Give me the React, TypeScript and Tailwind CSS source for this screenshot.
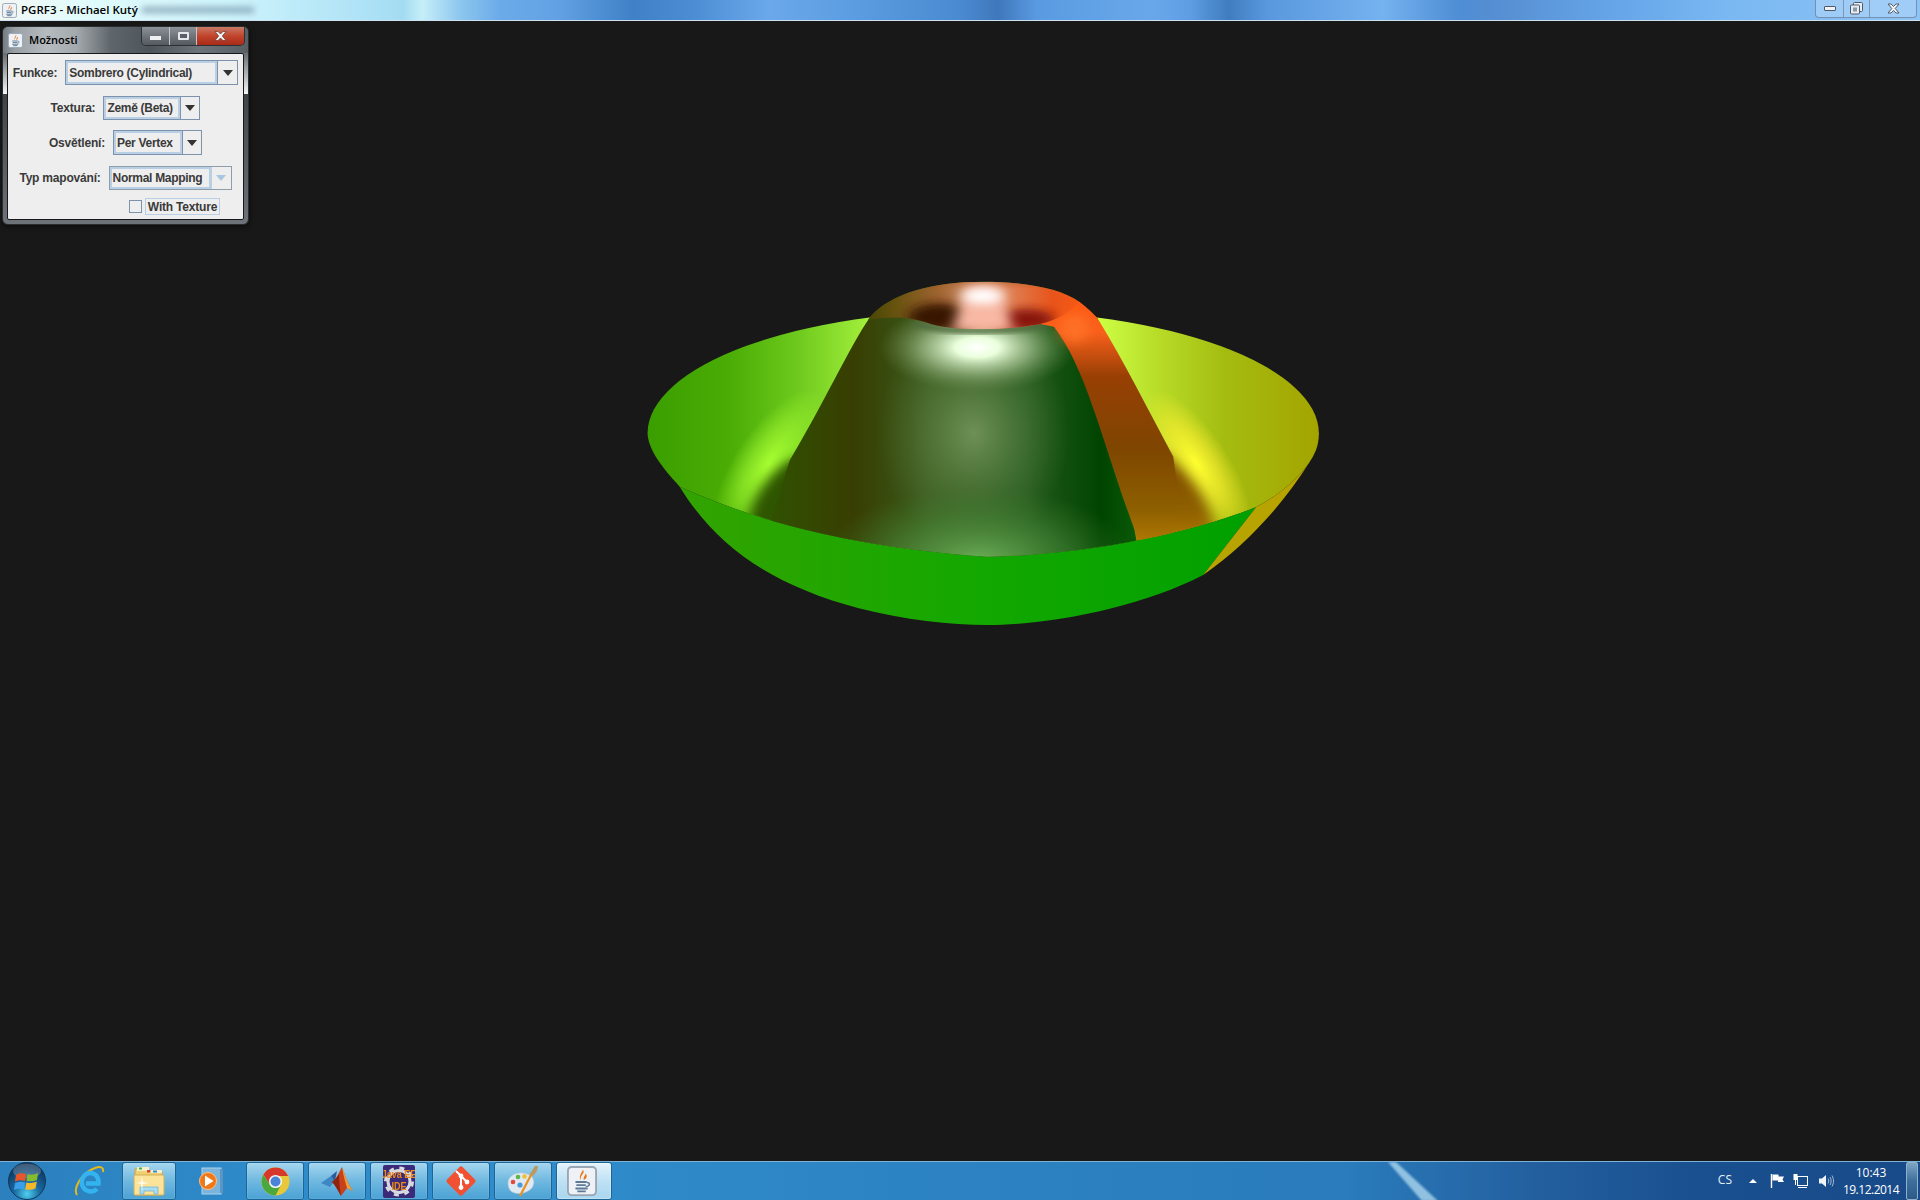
import React from 'react';

const sans = "font-['Liberation_Sans',sans-serif]";
const ui = "font-['Open_Sans',sans-serif]";

function JavaIcon({ size = 16 }: { size?: number }) {
    return (
        <svg width={size} height={size} viewBox="0 0 16 16">
            <rect x="0.5" y="0.5" width="15" height="15" rx="2" fill="#eef1f5" stroke="#9aa6b4" />
            <path d="M8.5 2 C10 4 6.5 5 7.5 7.5 C6 6 7.5 4 8.5 2 Z M10 4 C9.5 5.5 8.5 6 9 7.5 C10.5 6.5 11 5.5 10 4 Z" fill="#e8751a" />
            <path d="M4.5 8.5 H10.5 M5 10.2 H10 M4.5 12 H11 M5.5 13.5 H10" stroke="#5d7b96" strokeWidth="1" fill="none" />
            <path d="M10.5 8.8 C12.5 8.6 12.5 10.8 10 11" stroke="#5d7b96" strokeWidth="0.8" fill="none" />
        </svg>
    );
}

function TitleBar() {
    return (
        <div className="relative h-[21px] shrink-0 border-b border-[#cfe0ef] bg-[linear-gradient(90deg,#f2f7f5_0%,#e2fbfb_4%,#cdf3fb_12%,#aee2f6_19%,#a3dcf2_21%,#c6eef8_22%,#8cc6ee_24%,#6cabe9_26%,#62a2e4_29%,#3f80c6_33%,#4b8cd2_36%,#6aa8ea_40%,#5d9ee2_44%,#4a8ad0_50%,#3f78bc_52%,#5a9ae0_54%,#68a8ea_60%,#5e9de2_62%,#3f7cc0_64%,#5a98de_66%,#74b2f0_72%,#4f8dd4_76%,#568fd2_78%,#65a5e8_84%,#7ab8f2_90%,#8cc4f4_100%)]">
            <div className="flex h-full items-center pl-[2px]">
                <JavaIcon size={15} />
                <span className={`ml-[4px] text-[11.5px] leading-none font-semibold text-black ${ui}`}>PGRF3 - Michael Kutý</span>
                <div className="ml-[4px] h-[6px] w-[112px] bg-[#6f8fa5]/70 blur-[3px]" />
            </div>
            <div className="absolute top-0 right-[3px] flex h-[18px] w-[102px] rounded-b-[4px] border border-t-0 border-[#7590b0] bg-[#a9d2f8]/70">
                <div className="flex w-[28px] items-center justify-center border-r border-[#7c97b6]">
                    <div className="h-[5px] w-[12px] rounded-[1px] border border-[#505a66] bg-[#eef2f6]" />
                </div>
                <div className="flex w-[26px] items-center justify-center border-r border-[#7c97b6]">
                    <svg width="13" height="13" viewBox="0 0 13 13">
                        <rect x="3.5" y="0.5" width="9" height="9" rx="1" fill="#e6edf5" stroke="#505a66" />
                        <rect x="0.5" y="3" width="9" height="9" rx="1" fill="#e6edf5" stroke="#505a66" />
                        <rect x="3" y="5.5" width="4" height="4" fill="#8a98a8" />
                    </svg>
                </div>
                <div className="flex flex-1 items-center justify-center">
                    <svg width="13" height="11" viewBox="0 0 13 11">
                        <path d="M1 1 H4 L6.5 3.5 L9 1 H12 L8.2 5.5 L12 10 H9 L6.5 7.5 L4 10 H1 L4.8 5.5 Z" fill="#f2f5f8" stroke="#505a66" />
                    </svg>
                </div>
            </div>
        </div>
    );
}

function Combo({ text, width, arrow, disabled }: { text: string; width: string; arrow: string; disabled?: boolean }) {
    return (
        <div className={`flex h-full ${width} border ${disabled ? 'border-[#8f9dab]' : 'border-[#7d93ab]'} bg-[#eeeeee]`}>
            <div className="flex min-w-0 flex-1 items-center border-2 border-[#b8cfe5] pl-[1px]">
                <span className={`whitespace-nowrap text-[12px] font-bold tracking-[-0.3px] text-[#3a3a3a] ${sans}`}>{text}</span>
            </div>
            <div className={`flex ${arrow} shrink-0 items-center justify-center border-l ${disabled ? 'border-[#b8cfe5]' : 'border-[#7d93ab]'}`}>
                <svg width="10" height="6" viewBox="0 0 10 6">
                    <path d="M0 0 H10 L5 6 Z" fill={disabled ? '#a9c6e0' : '#333333'} />
                </svg>
            </div>
        </div>
    );
}

function Label({ children }: { children: React.ReactNode }) {
    return <span className={`whitespace-nowrap text-[12px] font-bold tracking-[-0.2px] text-[#3a3a3a] ${sans}`}>{children}</span>;
}

function OptionsDialog() {
    return (
        <div className="absolute top-[5px] left-[2px] flex h-[199px] w-[247px] flex-col overflow-hidden rounded-[6px] border border-[#2a2d30] bg-[linear-gradient(180deg,#5f666b_0%,#6a7176_14%,#f4f6f7_34%,#e6e8ea_34%,#3f4448_34.2%,#6d7378_100%)] shadow-[1px_2px_5px_rgba(0,0,0,0.5)]">
            <div className="relative flex h-[26px] shrink-0 items-center bg-[linear-gradient(90deg,#747d83_0%,#9aa1a6_5%,#b6bbbf_18%,#a4a9ad_30%,#5f666b_44%,#4e555a_60%,#6d7479_80%,#585f64_100%)] pl-[5px]">
                <JavaIcon size={15} />
                <span className={`ml-[6px] text-[11px] font-semibold text-black ${ui}`}>Možnosti</span>
                <div className="absolute top-0 right-[3px] flex h-[19px] w-[104px] overflow-hidden rounded-b-[5px] border border-t-0 border-[#2d3135]">
                    <div className="flex w-[28px] items-center justify-center border-r border-[#c0c6cb] bg-[linear-gradient(180deg,#8c9298_0%,#6f757b_50%,#53595e_100%)]">
                        <div className="h-[4px] w-[11px] translate-y-[2px] bg-[#eef0f2]" />
                    </div>
                    <div className="flex w-[27px] items-center justify-center border-r border-[#c0c6cb] bg-[linear-gradient(180deg,#8c9298_0%,#6f757b_50%,#53595e_100%)]">
                        <div className="flex h-[8px] w-[11px] items-center justify-center rounded-[1px] border-2 border-[#e6e8ea] bg-[#5a6065]" />
                    </div>
                    <div className="flex flex-1 items-center justify-center bg-[linear-gradient(180deg,#c97a66_0%,#c2442c_50%,#a82a18_100%)]">
                        <svg width="13" height="10" viewBox="0 0 13 10">
                            <path d="M1 0.5 H4 L6.5 3 L9 0.5 H12 L8.3 5 L12 9.5 H9 L6.5 7 L4 9.5 H1 L4.7 5 Z" fill="#f2f4f6" stroke="#5a3a34" strokeWidth="0.7" />
                        </svg>
                    </div>
                </div>
            </div>
            <div className="mx-[4px] flex h-[167px] flex-col rounded-[2px] border border-[#16181a] bg-[#eeeeee] pt-[6px]">
                <div className="flex h-[25px] items-center justify-center gap-2">
                    <Label>Funkce:</Label>
                    <Combo text="Sombrero (Cylindrical)" width="w-[173px]" arrow="w-[20px]" />
                </div>
                <div className="mt-[11px] flex h-[24px] items-center justify-center gap-2">
                    <Label>Textura:</Label>
                    <Combo text="Země (Beta)" width="w-[97px]" arrow="w-[19px]" />
                </div>
                <div className="mt-[10px] flex h-[25px] items-center justify-center gap-2">
                    <Label>Osvětlení:</Label>
                    <Combo text="Per Vertex" width="w-[89px]" arrow="w-[19px]" />
                </div>
                <div className="mt-[11px] flex h-[24px] items-center justify-center gap-2">
                    <Label>Typ mapování:</Label>
                    <Combo text="Normal Mapping" width="w-[123px]" arrow="w-[20px]" disabled />
                </div>
                <div className="mt-[8px] flex h-[17px] items-center justify-end gap-[3px] pr-[23px]">
                    <div className="h-[13px] w-[13px] border border-[#7d93ab] bg-[#eeeeee]" />
                    <div className="flex h-[17px] w-[75px] items-center justify-center border border-[#b8cfe5]">
                        <Label>With Texture</Label>
                    </div>
                </div>
            </div>
        </div>
    );
}

// coordinates are those of the 720x380 crop, stretched to 1568x1140
const rimFront = 'C 300 785, 500 860, 800 890 C 1000 885, 1220 830, 1385 742';
const rimBack = 'M60 520 A 731 370 0 0 1 1522 520';
const insidePath = `${rimBack} C 1522 560, 1512 585, 1500 610 C 1470 665, 1435 705, 1385 742 C 1220 830, 1000 885, 800 890 C 500 860, 300 785, 130 680 C 90 620, 62 570, 60 520 Z`;
const aboveRimPath = 'M0 0 H1568 V742 H1385 C 1220 830, 1000 885, 800 890 C 500 860, 300 785, 130 680 H0 Z';
const conePath = 'M545 170 C 590 100, 680 65, 790 65 C 880 65, 960 85, 1000 125 L 1040 175 L 1132 900 L 300 900 C 350 700, 360 640, 370 600 C 440 440, 500 260, 545 170 Z';
const stripePath = 'M915 192 C 950 180, 980 160, 1000 125 C 1020 145, 1030 160, 1040 175 C 1100 310, 1150 450, 1205 590 L 1215 700 L 1200 870 L 1132 850 C 1060 600, 1020 330, 945 200 Z';

function Sombrero() {
    return (
        <svg width="720" height="380" viewBox="0 0 1568 1140" preserveAspectRatio="none">
            <defs>
                <linearGradient id="inner" x1="60" x2="1522" y1="0" y2="0" gradientUnits="userSpaceOnUse">
                    <stop offset="0" stopColor="#3a9e00" />
                    <stop offset="0.12" stopColor="#4aac04" />
                    <stop offset="0.22" stopColor="#6cc81c" />
                    <stop offset="0.33" stopColor="#a4f03c" />
                    <stop offset="0.67" stopColor="#ccff44" />
                    <stop offset="0.76" stopColor="#b8dc28" />
                    <stop offset="0.86" stopColor="#a4bc10" />
                    <stop offset="1" stopColor="#a4a400" />
                </linearGradient>
                <linearGradient id="outer" x1="130" x2="1385" y1="0" y2="0" gradientUnits="userSpaceOnUse">
                    <stop offset="0" stopColor="#33a300" />
                    <stop offset="0.5" stopColor="#14a800" />
                    <stop offset="1" stopColor="#00a000" />
                </linearGradient>
                <linearGradient id="cone" x1="300" x2="1132" y1="0" y2="0" gradientUnits="userSpaceOnUse">
                    <stop offset="0" stopColor="#2f5400" />
                    <stop offset="0.25" stopColor="#383e02" />
                    <stop offset="0.45" stopColor="#3a5a1c" />
                    <stop offset="0.7" stopColor="#245a1c" />
                    <stop offset="0.9" stopColor="#004400" />
                    <stop offset="1" stopColor="#0a5c08" />
                </linearGradient>
                <linearGradient id="stripe" x1="0" x2="0" y1="130" y2="860" gradientUnits="userSpaceOnUse">
                    <stop offset="0" stopColor="#ff5a14" />
                    <stop offset="0.12" stopColor="#f8601c" />
                    <stop offset="0.3" stopColor="#983f04" />
                    <stop offset="0.6" stopColor="#7e4600" />
                    <stop offset="0.85" stopColor="#8e6000" />
                    <stop offset="1" stopColor="#b47c04" />
                </linearGradient>
                <linearGradient id="ring" x1="545" x2="1040" y1="0" y2="0" gradientUnits="userSpaceOnUse">
                    <stop offset="0" stopColor="#4a4804" />
                    <stop offset="0.12" stopColor="#6a5410" />
                    <stop offset="0.3" stopColor="#a06430" />
                    <stop offset="0.5" stopColor="#d89a78" />
                    <stop offset="0.8" stopColor="#e8541a" />
                    <stop offset="1" stopColor="#ff5a14" />
                </linearGradient>
                <radialGradient id="lime">
                    <stop offset="0" stopColor="#a8ff30" />
                    <stop offset="0.5" stopColor="#a0f830" stopOpacity="0.6" />
                    <stop offset="1" stopColor="#a0f830" stopOpacity="0" />
                </radialGradient>
                <radialGradient id="yellow">
                    <stop offset="0" stopColor="#ffff30" />
                    <stop offset="0.5" stopColor="#fff030" stopOpacity="0.6" />
                    <stop offset="1" stopColor="#fff030" stopOpacity="0" />
                </radialGradient>
                <radialGradient id="glare">
                    <stop offset="0" stopColor="#ffffff" />
                    <stop offset="0.22" stopColor="#eaffdc" />
                    <stop offset="0.55" stopColor="#a8c494" stopOpacity="0.7" />
                    <stop offset="1" stopColor="#6a8a50" stopOpacity="0" />
                </radialGradient>
                <radialGradient id="column">
                    <stop offset="0" stopColor="#7e9e66" stopOpacity="0.8" />
                    <stop offset="1" stopColor="#5a8044" stopOpacity="0" />
                </radialGradient>
                <radialGradient id="glow">
                    <stop offset="0" stopColor="#6cae58" />
                    <stop offset="0.55" stopColor="#4c8c3c" stopOpacity="0.55" />
                    <stop offset="1" stopColor="#3c7c2c" stopOpacity="0" />
                </radialGradient>
                <filter id="b8" x="-50%" y="-50%" width="200%" height="200%"><feGaussianBlur stdDeviation="8" /></filter>
                <filter id="b14" x="-50%" y="-50%" width="200%" height="200%"><feGaussianBlur stdDeviation="14" /></filter>
                <clipPath id="insideClip"><path d={insidePath} /></clipPath>
                <clipPath id="aboveRim"><path d={aboveRimPath} /></clipPath>
                <clipPath id="coneClip"><path d={conePath} /></clipPath>
                <clipPath id="holeClip">
                    <path d="M540 50 H1040 V180 L 915 192 C 860 208, 730 218, 672 190 C 640 175, 600 165, 540 180 Z" />
                </clipPath>
            </defs>

            {/* back of the bowl */}
            <path d={insidePath} fill="url(#inner)" />
            <g clipPath="url(#insideClip)">
                <ellipse cx="325" cy="610" rx="80" ry="240" fill="url(#lime)" transform="rotate(24 325 610)" />
                <ellipse cx="1255" cy="610" rx="75" ry="240" fill="url(#yellow)" transform="rotate(-24 1255 610)" />
                {/* soft foot of the cone */}
                <path d="M370 600 C 320 650, 285 720, 280 790 L 500 880 L 500 560 Z" fill="#2f5400" filter="url(#b14)" />
                <path d="M1130 540 L 1195 590 C 1240 650, 1285 720, 1295 810 L 1100 890 Z" fill="url(#stripe)" filter="url(#b14)" />
            </g>

            {/* outside of the bowl */}
            <path d={`M130 680 ${rimFront} L 1270 945 C 1130 1045, 930 1095, 800 1095 C 720 1095, 620 1080, 520 1045 C 330 975, 210 860, 130 680 Z`} fill="url(#outer)" />
            <path d="M1385 742 C 1435 705, 1470 665, 1500 610 C 1450 720, 1370 850, 1270 945 Z" fill="#b8a400" />

            {/* cone, cut off by the front rim */}
            <g clipPath="url(#aboveRim)">
                <path d={conePath} fill="url(#cone)" />
                <g clipPath="url(#coneClip)">
                    <ellipse cx="770" cy="520" rx="210" ry="340" fill="url(#column)" />
                    <ellipse cx="780" cy="900" rx="340" ry="220" fill="url(#glow)" />
                    <ellipse cx="778" cy="262" rx="215" ry="135" fill="url(#glare)" />
                    <path d="M640 190 C 720 225, 860 215, 930 195" fill="none" stroke="#4e6a3c" strokeWidth="16" filter="url(#b8)" />
                    {/* top of the ring and the hole */}
                    <g clipPath="url(#holeClip)">
                        <rect x="540" y="50" width="500" height="170" fill="url(#ring)" />
                        <rect x="560" y="50" width="470" height="24" fill="#b05a20" opacity="0.6" filter="url(#b8)" />
                        <ellipse cx="695" cy="172" rx="68" ry="42" fill="#381404" filter="url(#b14)" />
                        <ellipse cx="885" cy="180" rx="62" ry="34" fill="#881808" filter="url(#b14)" />
                        <path d="M755 80 H825 L855 210 H725 Z" fill="#f8b8a4" filter="url(#b14)" />
                        <ellipse cx="790" cy="108" rx="44" ry="24" fill="#ffffff" filter="url(#b14)" />
                    </g>
                </g>
                {/* orange seam of the texture */}
                <path d={stripePath} fill="url(#stripe)" />
                <ellipse cx="990" cy="205" rx="30" ry="45" fill="#ff7428" filter="url(#b14)" opacity="0.8" />
            </g>
        </svg>
    );
}

function TaskButton({ active, width, children }: { active?: boolean; width: string; children: React.ReactNode }) {
    return (
        <div className={`flex h-[38px] ${width} shrink-0 items-center justify-center rounded-[3px] border border-[#1d6596] ${active ? 'bg-[linear-gradient(180deg,#e4f3fb_0%,#bfe1f4_50%,#a8d6ef_100%)] shadow-[inset_0_0_2px_#ffffff]' : 'bg-[linear-gradient(180deg,#a5d6ef_0%,#6fb8e0_50%,#4aa2d4_100%)] shadow-[inset_0_0_1px_#d8effa]'}`}>
            {children}
        </div>
    );
}

function StartOrb() {
    return (
        <svg width="40" height="40" viewBox="0 0 40 40">
            <defs>
                <radialGradient id="orb" cx="0.5" cy="0.85" r="0.85">
                    <stop offset="0" stopColor="#4fd0f0" />
                    <stop offset="0.4" stopColor="#1a6aa0" />
                    <stop offset="1" stopColor="#0a2a50" />
                </radialGradient>
            </defs>
            <circle cx="20" cy="20" r="18.5" fill="url(#orb)" stroke="#0e3a5e" />
            <ellipse cx="20" cy="10" rx="14" ry="7.5" fill="#ffffff" opacity="0.22" />
            <path d="M9 14 C 12 11.5, 15 12, 19 13 L 18 20 C 15 19, 12 19, 8 20.5 Z" fill="#e8562a" />
            <path d="M20.5 13 C 24 14, 27 14, 31 12 L 30 19 C 26.5 20.5, 23.5 20.5, 19.5 20 Z" fill="#86bc2c" />
            <path d="M8 22 C 12 20.5, 15 20.5, 18 21.5 L 17 28.5 C 14 27.5, 11 27.5, 7 29 Z" fill="#3a9ee8" />
            <path d="M19.3 21.5 C 23 22.5, 26 22, 29.8 20.5 L 28.5 27.5 C 25 29, 22 29, 18.3 28.5 Z" fill="#f4b82a" />
        </svg>
    );
}

function IeIcon() {
    return (
        <svg width="32" height="32" viewBox="0 0 32 32">
            <path d="M4 30 C 0 24, 8 8, 22 3 C 27 1, 31 2, 30 7" fill="none" stroke="#e8b818" strokeWidth="2" />
            <path d="M24 24 C 20 28, 12 27, 9.5 21 C 7 14, 12 8, 17 8 C 23 8, 26 13, 25.5 18.5 H 13" fill="none" stroke="#34b4ee" strokeWidth="4.5" />
        </svg>
    );
}

function FolderIcon() {
    return (
        <svg width="32" height="30" viewBox="0 0 32 30">
            <path d="M2 3 H13 L15 5 H29 V29 H2 Z" fill="#f0d070" stroke="#c8a448" />
            <rect x="4" y="1" width="12" height="4" fill="#f6eecb" />
            <rect x="6" y="1.5" width="3" height="2" fill="#3cb83c" />
            <rect x="14" y="4" width="3" height="2.5" fill="#d84030" />
            <rect x="18" y="4" width="11" height="3" fill="#f6eecb" />
            <rect x="20" y="4.5" width="4" height="2" fill="#2a8fe0" />
            <rect x="1" y="9" width="30" height="20" rx="1" fill="#fbe49a" stroke="#d2b058" />
            <path d="M7 28 V21 H25 V28 H21 V25 H11 V28 Z" fill="#a8dcf0" stroke="#6aaed0" strokeWidth="0.7" />
            <path d="M9 10 L10 16 L16 17 L10 18 L9 25 L8 18 L3 17 L8 16 Z" fill="#ffffff" opacity="0.8" />
        </svg>
    );
}

function WmpIcon() {
    return (
        <svg width="28" height="30" viewBox="0 0 28 30">
            <rect x="5" y="2" width="19" height="26" fill="#7ab4dc" stroke="#a8d4ec" />
            <rect x="23" y="3" width="3" height="24" fill="#5a96c4" />
            <circle cx="11" cy="15" r="8.5" fill="#f07818" stroke="#ffc080" />
            <path d="M8 9.5 L16.5 15 L8 20.5 Z" fill="#ffffff" />
        </svg>
    );
}

function ChromeIcon() {
    return (
        <svg width="29" height="29" viewBox="0 0 29 29">
            <circle cx="14.5" cy="14.5" r="14" fill="#e8c838" />
            <path d="M14.5 0.5 A14 14 0 0 0 2.4 7.5 L9 18 L14.5 9 H27.2 A14 14 0 0 0 14.5 0.5 Z" fill="#d8382c" />
            <path d="M2.4 7.5 A14 14 0 0 0 14.5 28.5 L20 18 H9 Z" fill="#4aa83c" />
            <circle cx="14.5" cy="14.5" r="6.6" fill="#f2f4f6" />
            <circle cx="14.5" cy="14.5" r="5" fill="#4a84d8" />
        </svg>
    );
}

function MatlabIcon() {
    return (
        <svg width="34" height="30" viewBox="0 0 34 30">
            <path d="M1 17 L11 10 L15 14 L10 21 Z" fill="#3f86c4" />
            <path d="M11 10 L17 5 L15 15 Z" fill="#2a5a9a" />
            <path d="M22 1 C 25 10, 29 20, 33 25 L 27 22 L 21 30 C 18 24, 15 19, 12 16 C 17 13, 19 6, 22 1 Z" fill="#c8401c" />
            <path d="M22 1 C 25 10, 29 20, 33 25 L 27 22 C 25 15, 23 8, 22 1 Z" fill="#f0a030" />
            <path d="M12 16 C 15 14, 17 11, 19 8 C 19 16, 20 24, 21 30 C 18 24, 15 19, 12 16 Z" fill="#8c2410" />
        </svg>
    );
}

function JavaEeIcon() {
    return (
        <div className="relative flex h-[33px] w-[32px] items-center justify-center overflow-hidden rounded-[2px] bg-[#3a2a78]">
            <svg className="absolute inset-0" width="32" height="33" viewBox="0 0 32 33">
                <circle cx="16" cy="16.5" r="11" fill="none" stroke="#d8d8e0" strokeWidth="3" />
                <circle cx="16" cy="16.5" r="13.5" fill="none" stroke="#d8d8e0" strokeWidth="3" strokeDasharray="5 5.6" />
            </svg>
            <div className={`relative scale-y-[1.3] text-center text-[9px] leading-[9px] font-bold whitespace-nowrap text-[#f08a18] ${sans}`}>
                <div>Java EE</div>
                <div>IDE</div>
            </div>
        </div>
    );
}

function GitIcon() {
    return (
        <svg width="34" height="34" viewBox="0 0 34 34">
            <rect x="6" y="6" width="22" height="22" rx="2.5" fill="#f05133" transform="rotate(45 17 17)" />
            <path d="M12 7 L17 12 V23 M17 12 L23 18" stroke="#ffffff" strokeWidth="2" fill="none" />
            <circle cx="17" cy="12" r="2.4" fill="#ffffff" />
            <circle cx="17" cy="23.5" r="2.4" fill="#ffffff" />
            <circle cx="23" cy="18" r="2.4" fill="#ffffff" />
        </svg>
    );
}

function PaintIcon() {
    return (
        <svg width="34" height="34" viewBox="0 0 34 34">
            <path d="M2 19 C 2 12, 10 8, 17 9 C 25 10, 30 15, 27 22 C 25 27, 16 31, 9 29 C 4 28, 2 24, 2 19 Z" fill="#dfe9f2" stroke="#b4c4d2" strokeWidth="0.6" />
            <circle cx="7" cy="18" r="2.3" fill="#e04a3c" />
            <circle cx="12" cy="13" r="2.3" fill="#5ab84a" />
            <circle cx="18.5" cy="12.5" r="2.3" fill="#f0c030" />
            <circle cx="14" cy="21" r="2.6" fill="#4a9ad8" />
            <path d="M14 32 L26 9" stroke="#e89020" strokeWidth="2.2" />
            <path d="M24 10 L29 2 L32 2 L31 7 L27 12 Z" fill="#b89a60" />
        </svg>
    );
}

function Tray() {
    return (
        <div className="ml-auto flex h-full items-center">
            <span className={`mb-[3px] text-[12px] text-[#e8eff6] ${ui}`}>CS</span>
            <svg className="ml-[17px]" width="8" height="4" viewBox="0 0 8 4"><path d="M0 4 L4 0 L8 4 Z" fill="#ffffff" /></svg>
            <svg className="ml-[13px]" width="15" height="16" viewBox="0 0 15 16">
                <path d="M1.5 1 V15" stroke="#ffffff" strokeWidth="1.4" />
                <path d="M2.5 1.5 H8.5 V3.5 H14 L12.5 6.5 L14 9 H8 V7.5 H2.5 Z" fill="#ffffff" />
            </svg>
            <svg className="ml-[8px]" width="15" height="16" viewBox="0 0 15 16">
                <rect x="4.5" y="3.5" width="10" height="9" fill="none" stroke="#ffffff" />
                <path d="M5 14.5 H14" stroke="#ffffff" />
                <rect x="0.5" y="1" width="4" height="6" fill="#ffffff" />
                <path d="M2.5 7 V12" stroke="#ffffff" />
            </svg>
            <svg className="ml-[11px]" width="15" height="14" viewBox="0 0 15 14">
                <path d="M0 4.5 H3 L7 1 V13 L3 9.5 H0 Z" fill="#f0f4f8" />
                <path d="M9 4.5 C 10 6, 10 8, 9 9.5 M11 3 C 12.5 5.5, 12.5 8.5, 11 11 M13 1.5 C 15 5, 15 9, 13 12.5" stroke="#c8d8e8" fill="none" strokeWidth="0.8" />
            </svg>
            <div className={`ml-[7px] flex w-[60px] flex-col items-center text-[12px] leading-[17px] text-white ${ui}`}>
                <span>10:43</span>
                <span className="tracking-[-0.5px]">19.12.2014</span>
            </div>
            <div className="ml-[5px] h-full w-[12px] rounded-[2px] border border-[#8fb0cc] bg-[linear-gradient(180deg,#7ea4c4_0%,#3e6f9c_50%,#2c5a88_100%)]" />
            <div className="w-[2px]" />
        </div>
    );
}

function Taskbar() {
    return (
        <div className="relative h-[39px] shrink-0 overflow-hidden border-t border-[#7fb2d4] bg-[linear-gradient(90deg,#2b80bd_0%,#2f8bca_15%,#2f8bca_30%,#2c82c2_50%,#2a7cbc_70%,#235f9f_80%,#1a5090_88%,#184a88_100%)]">
            <svg className="absolute top-0 left-[1380px] blur-[1px]" width="70" height="39" viewBox="0 0 70 39">
                <path d="M8 0 H16 L58 39 H42 Z" fill="#b4dcf0" opacity="0.75" />
            </svg>
            <div className="relative flex h-full items-center">
                <div className="flex w-[54px] shrink-0 items-center justify-center"><StartOrb /></div>
                <div className="flex w-[68px] shrink-0 items-center justify-center pl-[1px]"><IeIcon /></div>
                <TaskButton width="w-[54px]"><FolderIcon /></TaskButton>
                <div className="flex w-[70px] shrink-0 items-center justify-center"><WmpIcon /></div>
                <div className="flex gap-[4px]">
                    <TaskButton width="w-[58px]"><ChromeIcon /></TaskButton>
                    <TaskButton width="w-[58px]"><MatlabIcon /></TaskButton>
                    <TaskButton width="w-[58px]"><JavaEeIcon /></TaskButton>
                    <TaskButton width="w-[58px]"><GitIcon /></TaskButton>
                    <TaskButton width="w-[58px]"><PaintIcon /></TaskButton>
                    <TaskButton width="w-[56px]" active>
                        <div className="-translate-x-[2px]"><JavaIcon size={30} /></div>
                    </TaskButton>
                </div>
                <Tray />
            </div>
        </div>
    );
}

export default function App() {
    return (
        <div className="flex h-[1200px] w-[1920px] flex-col overflow-hidden bg-[#181818]">
            <TitleBar />
            <div className="relative flex-1 pt-[239px] pl-[620px]">
                <Sombrero />
                <OptionsDialog />
            </div>
            <Taskbar />
        </div>
    );
}
